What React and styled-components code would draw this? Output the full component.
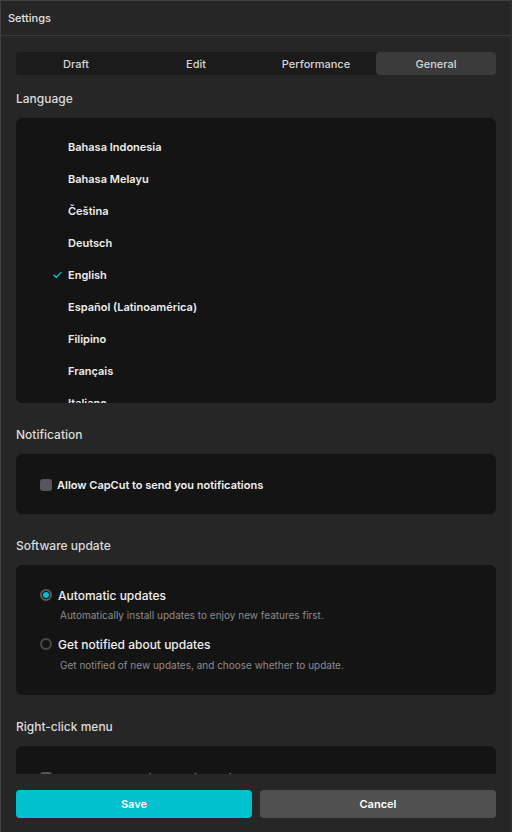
import React, { useState } from 'react';
import styled, { createGlobalStyle } from 'styled-components';

const GlobalStyle = createGlobalStyle`
  html, body { margin: 0; padding: 0; background: #262626; }
  * { box-sizing: border-box; }
  body { font-family: "Inter", "Noto Sans", sans-serif; -webkit-font-smoothing: antialiased; }
`;

const Window = styled.div`
  width: 512px;
  height: 832px;
  display: flex;
  flex-direction: column;
  background: #262626;
  border-top: 1px solid #414141;
  border-left: 1px solid #414141;
  border-right: 2px solid #2e2e2e;
  overflow: hidden;
`;

const TitleBar = styled.div`
  height: 35px;
  flex: none;
  display: flex;
  align-items: center;
  padding-left: 7px;
  font-size: 11px;
  font-weight: 500;
  color: #e2e2e2;
  border-bottom: 1px solid #3a3a3a;
`;

const Scroll = styled.div`
  flex: 1;
  overflow: hidden;
  padding: 16px 14px 0 15px;
`;

const Tabs = styled.div`
  display: grid;
  grid-template-columns: repeat(4, 1fr);
  height: 23px;
  background: #1b1b1b;
  border-radius: 4px;
`;

const Tab = styled.button`
  border: none;
  border-radius: 4px;
  font-family: inherit;
  font-size: 11px;
  font-weight: 500;
  color: #d6d6d6;
  background: ${p => (p.$active ? '#3b3b3b' : 'transparent')};
  cursor: pointer;
  padding: 0;
`;

const Label = styled.div`
  padding: 16px 0 12px;
  line-height: 15px;
  font-size: 12px;
  font-weight: 500;
  color: #dcdcdc;
`;

const Panel = styled.div`
  background: #141414;
  border-radius: 6px;
  margin-bottom: 8px;
  height: ${p => p.$height || 'auto'};
  overflow: hidden;
  padding: ${p => p.$padding || '24px'};
`;

const LangItem = styled.div`
  height: 32px;
  display: flex;
  align-items: center;
  font-size: 11px;
  font-weight: 600;
  color: #ededed;
  padding-left: 37px;
  cursor: pointer;
`;

const CheckSlot = styled.span`
  width: 15px;
  display: flex;
  align-items: center;
  color: #00c1cd;
`;

const Row = styled.label`
  display: flex;
  align-items: center;
  height: 16px;
  font-size: ${p => (p.$big ? '12px' : '11px')};
  font-weight: ${p => (p.$big ? 500 : 600)};
  color: #f0f0f0;
  cursor: pointer;
`;

const Box = styled.span`
  width: 12px;
  height: 12px;
  border-radius: 3px;
  background: #55555b;
  margin-right: 5px;
  flex: none;
`;

const Radio = styled.span`
  width: 12px;
  height: 12px;
  border-radius: 50%;
  border: 2px solid ${p => (p.$on ? '#5a5a5a' : '#4a4a4a')};
  margin-right: 6px;
  display: flex;
  align-items: center;
  justify-content: center;
  flex: none;
  &::after {
    content: '';
    width: 6px;
    height: 6px;
    border-radius: 50%;
    background: ${p => (p.$on ? '#00c1cd' : 'transparent')};
  }
`;

const Desc = styled.div`
  margin: ${p => (p.$last ? '6px 0 0 20px' : '5px 0 14px 20px')};
  line-height: 14px;
  font-size: 10px;
  color: #8c8c8c;
`;

const Footer = styled.div`
  flex: none;
  height: 58px;
  display: grid;
  grid-template-columns: 1fr 1fr;
  gap: 8px;
  padding: 16px 14px 14px 15px;
  background: #262626;
`;

const Button = styled.button`
  border: none;
  border-radius: 4px;
  font-family: inherit;
  font-size: 11px;
  font-weight: 600;
  color: #fff;
  background: ${p => (p.$primary ? '#00c1cd' : '#505050')};
  cursor: pointer;
`;

const languages = [
  'Bahasa Indonesia',
  'Bahasa Melayu',
  'Čeština',
  'Deutsch',
  'English',
  'Español (Latinoamérica)',
  'Filipino',
  'Français',
  'Italiano',
  'Magyar',
];

const tabs = ['Draft', 'Edit', 'Performance', 'General'];

const Check = () => (
  <svg width="9" height="8" viewBox="0 0 9 8" fill="none">
    <path d="M1 4.2 L3.4 6.4 L8 1.4" stroke="currentColor" strokeWidth="1.4" strokeLinecap="round" strokeLinejoin="round" />
  </svg>
);

const App = () => {
  const [tab, setTab] = useState('General');
  const [lang, setLang] = useState('English');
  const [update, setUpdate] = useState('auto');

  return (
    <>
      <GlobalStyle />
      <Window>
        <TitleBar>Settings</TitleBar>
        <Scroll>
          <Tabs>
            {tabs.map(t => (
              <Tab key={t} $active={t === tab} onClick={() => setTab(t)}>{t}</Tab>
            ))}
          </Tabs>

          <Label>Language</Label>
          <Panel $height="285px" $padding="13px 0 0">
            {languages.map(l => (
              <LangItem key={l} onClick={() => setLang(l)}>
                <CheckSlot>{l === lang && <Check />}</CheckSlot>
                {l}
              </LangItem>
            ))}
          </Panel>

          <Label>Notification</Label>
          <Panel $padding="23px 24px 21px">
            <Row>
              <Box />
              Allow CapCut to send you notifications
            </Row>
          </Panel>

          <Label>Software update</Label>
          <Panel $padding="22px 24px 23px">
            <Row $big onClick={() => setUpdate('auto')}>
              <Radio $on={update === 'auto'} />
              Automatic updates
            </Row>
            <Desc>Automatically install updates to enjoy new features first.</Desc>
            <Row $big onClick={() => setUpdate('notify')}>
              <Radio $on={update === 'notify'} />
              Get notified about updates
            </Row>
            <Desc $last>Get notified of new updates, and choose whether to update.</Desc>
          </Panel>

          <Label>Right-click menu</Label>
          <Panel>
            <Row>
              <Box />
              Add CapCut to Windows right-click menu
            </Row>
          </Panel>
        </Scroll>
        <Footer>
          <Button $primary>Save</Button>
          <Button>Cancel</Button>
        </Footer>
      </Window>
    </>
  );
};

export default App;
